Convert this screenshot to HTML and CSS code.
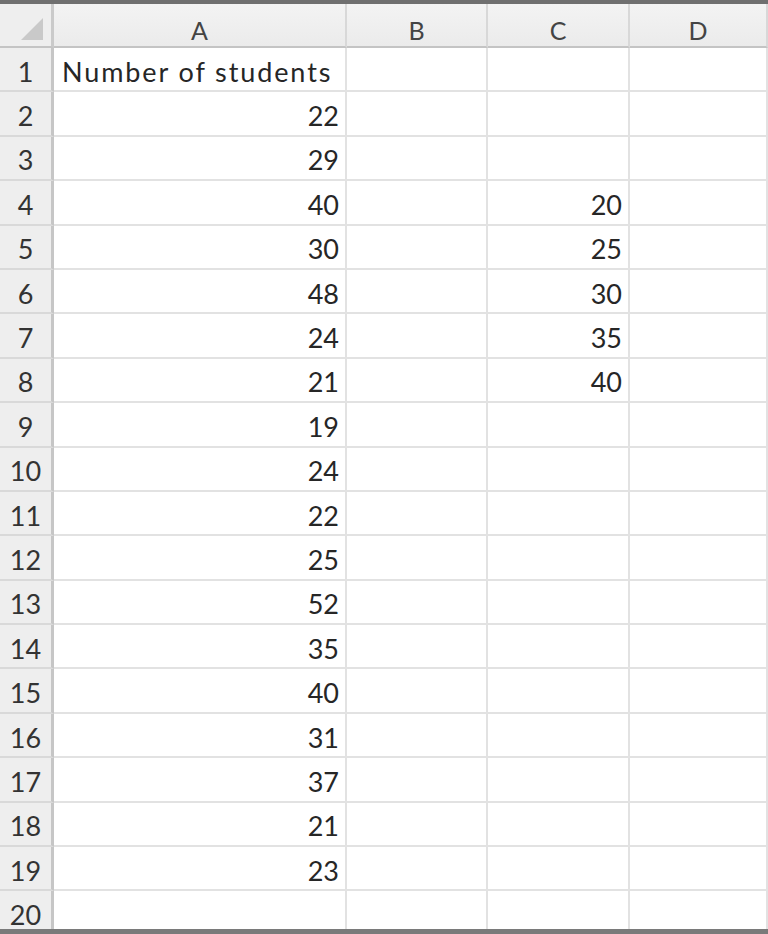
FILE: index.html
```html
<!DOCTYPE html>
<html lang="en">
<head>
<meta charset="utf-8">
<title>Number of students</title>
<link rel="stylesheet" href="styles.css">
</head>
<body>
<div class="frame">
  <div class="sheet">
    <div class="corner">
      <svg class="corner-mark" width="26" height="26" viewBox="0 0 26 26"><polygon points="24,2 24,24 2,24" fill="#c9c9c9"/></svg>
    </div>
    <div class="col-head">A</div>
    <div class="col-head">B</div>
    <div class="col-head">C</div>
    <div class="col-head">D</div>

    <div class="row-head">1</div><div class="cell text">Number of students</div><div class="cell"></div><div class="cell"></div><div class="cell"></div>
    <div class="row-head">2</div><div class="cell num">22</div><div class="cell"></div><div class="cell"></div><div class="cell"></div>
    <div class="row-head">3</div><div class="cell num">29</div><div class="cell"></div><div class="cell"></div><div class="cell"></div>
    <div class="row-head">4</div><div class="cell num">40</div><div class="cell"></div><div class="cell num">20</div><div class="cell"></div>
    <div class="row-head">5</div><div class="cell num">30</div><div class="cell"></div><div class="cell num">25</div><div class="cell"></div>
    <div class="row-head">6</div><div class="cell num">48</div><div class="cell"></div><div class="cell num">30</div><div class="cell"></div>
    <div class="row-head">7</div><div class="cell num">24</div><div class="cell"></div><div class="cell num">35</div><div class="cell"></div>
    <div class="row-head">8</div><div class="cell num">21</div><div class="cell"></div><div class="cell num">40</div><div class="cell"></div>
    <div class="row-head">9</div><div class="cell num">19</div><div class="cell"></div><div class="cell"></div><div class="cell"></div>
    <div class="row-head">10</div><div class="cell num">24</div><div class="cell"></div><div class="cell"></div><div class="cell"></div>
    <div class="row-head">11</div><div class="cell num">22</div><div class="cell"></div><div class="cell"></div><div class="cell"></div>
    <div class="row-head">12</div><div class="cell num">25</div><div class="cell"></div><div class="cell"></div><div class="cell"></div>
    <div class="row-head">13</div><div class="cell num">52</div><div class="cell"></div><div class="cell"></div><div class="cell"></div>
    <div class="row-head">14</div><div class="cell num">35</div><div class="cell"></div><div class="cell"></div><div class="cell"></div>
    <div class="row-head">15</div><div class="cell num">40</div><div class="cell"></div><div class="cell"></div><div class="cell"></div>
    <div class="row-head">16</div><div class="cell num">31</div><div class="cell"></div><div class="cell"></div><div class="cell"></div>
    <div class="row-head">17</div><div class="cell num">37</div><div class="cell"></div><div class="cell"></div><div class="cell"></div>
    <div class="row-head">18</div><div class="cell num">21</div><div class="cell"></div><div class="cell"></div><div class="cell"></div>
    <div class="row-head">19</div><div class="cell num">23</div><div class="cell"></div><div class="cell"></div><div class="cell"></div>
    <div class="row-head">20</div><div class="cell"></div><div class="cell"></div><div class="cell"></div><div class="cell"></div>
  </div>
</div>
</body>
</html>
```

FILE: styles.css
```css
html, body {
  margin: 0;
  padding: 0;
  background: #ffffff;
}

.frame {
  width: 768px;
  height: 934px;
  box-sizing: border-box;
  border-top: 4px solid #6f6f6f;
  border-bottom: 5px solid #7a7a7a;
  overflow: hidden;
  background: #ffffff;
  font-family: Lato, "Open Sans", "Liberation Sans", sans-serif;
  color: #262626;
}

.sheet {
  display: grid;
  grid-template-columns: 54px 293px 141px 142px 138px;
  grid-template-rows: 44px repeat(20, 44.4px);
}

.corner,
.col-head,
.row-head,
.cell {
  box-sizing: border-box;
  display: flex;
  align-items: center;
  padding-top: 4px;
}

/* top-left select-all box */
.corner {
  background: #eeeeee;
  border-right: 3px solid #cacaca;
  border-bottom: 2px solid #c4c4c4;
  align-items: flex-start;
  justify-content: flex-start;
  padding: 12px 0 0 19px;
}

.corner-mark {
  display: block;
}

.col-head {
  justify-content: center;
  padding-top: 9px;
  background: linear-gradient(#f3f3f3, #ebebeb);
  border-right: 2px solid #d8d8d8;
  border-bottom: 2px solid #c4c4c4;
  font-size: 25px;
  color: #444444;
}

.row-head {
  justify-content: center;
  background: #eeeeee;
  border-right: 3px solid #c6c6c6;
  border-bottom: 2px solid #d9d9d9;
  font-size: 27px;
  color: #333333;
}

.cell {
  border-right: 2px solid #e2e2e2;
  border-bottom: 2px solid #e2e2e2;
  font-size: 27px;
  white-space: nowrap;
}

.cell.text {
  justify-content: flex-start;
  padding-left: 8px;
  letter-spacing: 1.9px;
}

.cell.num {
  justify-content: flex-end;
  padding-right: 6px;
}
```
